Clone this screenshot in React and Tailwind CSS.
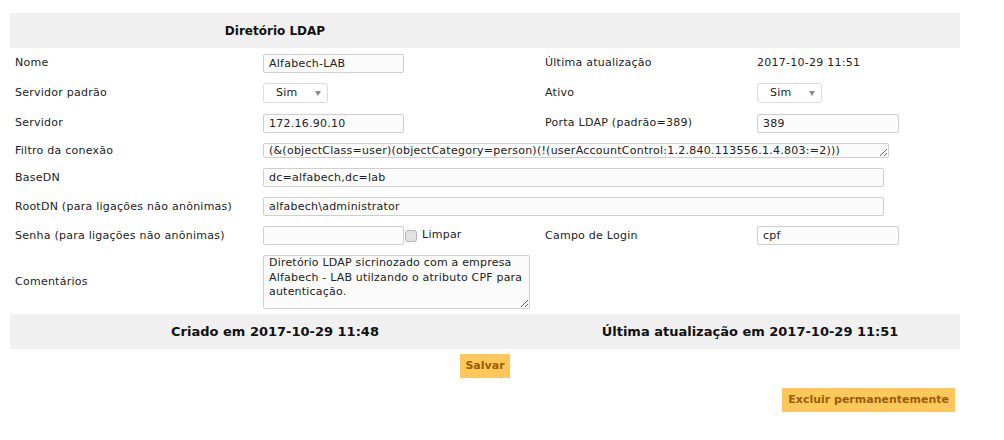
import { useState } from 'react';

const inputCls = "h-[19px] border border-[#cfcfcf] rounded-[2px] bg-[#fbfbfb] px-[5px] text-[11px] tracking-[0.25px] text-[#222] outline-none";

const Label = ({ children }) => (
  <div className="flex items-center pt-[1px] px-[5px] text-[11px] tracking-[0.25px] text-[#222]">{children}</div>
);

const Cell = ({ children, className = "" }) => (
  <div className={"flex items-center px-[5px] " + className}>{children}</div>
);

const FakeSelect = ({ value }) => (
  <div className="h-[20px] w-[65px] flex items-center border border-[#dcdcdc] rounded-[3px] bg-white pl-[12px] pr-[6px] text-[11px] tracking-[0.25px] text-[#222]">
    <span className="flex-1">{value}</span>
    <svg width="6" height="5" viewBox="0 0 6 5" className="mt-[1px]">
      <path d="M0 0 L6 0 L3 5 Z" fill="#8a8a8a" />
    </svg>
  </div>
);

export default function App() {
  const [nome, setNome] = useState("Alfabech-LAB");
  const [limpar, setLimpar] = useState(false);

  return (
    <div className="min-h-screen bg-white pt-[13px] pl-[10px] font-['DejaVu_Sans',sans-serif]">
      <div className="w-[950px] grid grid-cols-[248px_282px_212px_208px] grid-rows-[35px_30px_30px_30px_25px_29px_29px_29px_64px_35px]">
        {/* header */}
        <div className="col-span-2 bg-[#f0f0f0] flex items-center justify-center text-[12px] font-bold text-[#111]">Diretório LDAP</div>
        <div className="col-span-2 bg-[#f0f0f0]"></div>

        <Label>Nome</Label>
        <Cell>
          <input className={inputCls + " w-[141px]"} value={nome} onChange={e => setNome(e.target.value)} />
        </Cell>
        <Label>Última atualização</Label>
        <Cell className="pt-[1px] text-[11px] tracking-[0.25px] text-[#222]">2017-10-29 11:51</Cell>

        <Label>Servidor padrão</Label>
        <Cell><FakeSelect value="Sim" /></Cell>
        <Label>Ativo</Label>
        <Cell><FakeSelect value="Sim" /></Cell>

        <Label>Servidor</Label>
        <Cell><input className={inputCls + " w-[141px]"} defaultValue="172.16.90.10" /></Cell>
        <Label>Porta LDAP (padrão=389)</Label>
        <Cell><input className={inputCls + " w-[142px]"} defaultValue="389" /></Cell>

        <Label>Filtro da conexão</Label>
        <Cell className="col-span-3">
          <textarea
            rows={1}
            className="h-[15px] w-[626px] border border-[#cfcfcf] rounded-[2px] bg-[#fbfbfb] px-[5px] py-0 text-[11px] leading-[13px] tracking-[0.25px] text-[#222] outline-none overflow-hidden whitespace-nowrap"
            defaultValue="(&(objectClass=user)(objectCategory=person)(!(userAccountControl:1.2.840.113556.1.4.803:=2)))"
          />
        </Cell>

        <Label>BaseDN</Label>
        <Cell className="col-span-3"><input className={inputCls + " w-[621px]"} defaultValue="dc=alfabech,dc=lab" /></Cell>

        <Label>RootDN (para ligações não anônimas)</Label>
        <Cell className="col-span-3"><input className={inputCls + " w-[621px]"} defaultValue="alfabech\administrator" /></Cell>

        <Label>Senha (para ligações não anônimas)</Label>
        <Cell>
          <input type="password" className={inputCls + " w-[141px]"} />
          <button
            type="button"
            onClick={() => setLimpar(!limpar)}
            className="ml-[1px] w-[12px] h-[12px] rounded-[3px] border border-[#b5b5b5] bg-[#e2e2e2]"
          ></button>
          <span className="ml-[5px] text-[11px] tracking-[0.25px] text-[#222]">Limpar</span>
        </Cell>
        <Label>Campo de Login</Label>
        <Cell><input className={inputCls + " w-[142px]"} defaultValue="cpf" /></Cell>

        <Label>Comentários</Label>
        <Cell>
          <textarea
            className="h-[54px] w-[267px] border border-[#cfcfcf] rounded-[2px] bg-[#fbfbfb] pl-[5px] pr-0 pt-0 text-[11px] leading-[14.6px] tracking-[0.2px] text-[#222] outline-none"
            defaultValue="Diretório LDAP sicrinozado com a empresa Alfabech - LAB utilzando o atributo CPF para autenticação."
          />
        </Cell>
        <div></div>
        <div></div>

        {/* footer */}
        <div className="col-span-2 bg-[#f0f0f0] flex items-center justify-center text-[13px] font-bold text-[#111]">Criado em 2017-10-29 11:48</div>
        <div className="col-span-2 bg-[#f0f0f0] flex items-center justify-center text-[13px] font-bold text-[#111]">Última atualização em 2017-10-29 11:51</div>
      </div>

      <div className="w-[950px] flex justify-center mt-[5px]">
        <button className="h-[24px] px-[5px] bg-[#fdc85b] text-[#9a5d08] text-[11px] font-bold">Salvar</button>
      </div>
      <div className="w-[950px] flex justify-end mt-[10px] pr-[5px]">
        <button className="h-[24px] px-[6px] bg-[#fdc85b] text-[#9a5d08] text-[11px] font-bold">Excluir permanentemente</button>
      </div>
    </div>
  );
}
